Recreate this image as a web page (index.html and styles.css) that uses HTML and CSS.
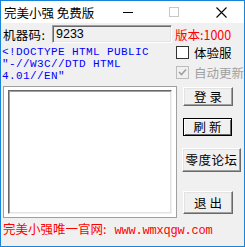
FILE: index.html
```html
<!DOCTYPE html>
<html lang="zh">
<head>
<meta charset="utf-8">
<title>完美小强 免费版</title>
<link rel="stylesheet" href="styles.css">
</head>
<body>
<div class="window">
  <div class="titlebar">
    <span class="title">完美小强 免费版</span>
    <div class="controls">
      <span class="ctl ctl-min"><svg width="11" height="11" viewBox="0 0 11 11"><rect x="0" y="5" width="10" height="1" fill="#000"/></svg></span>
      <span class="ctl ctl-max"><svg width="11" height="11" viewBox="0 0 11 11"><rect x="0.5" y="0.5" width="9" height="9" fill="none" stroke="#c8c8c8"/></svg></span>
      <span class="ctl ctl-close"><svg width="11" height="11" viewBox="0 0 11 11"><path d="M0.5 0.5 L10.5 10.5 M10.5 0.5 L0.5 10.5" stroke="#000" stroke-width="1.1"/></svg></span>
    </div>
  </div>
  <div class="client">
    <div class="row-code">
      <span class="label">机器码:</span>
      <div class="input">9233</div>
      <span class="version">版本:1000</span>
    </div>
    <div class="row-info">
      <div class="doctype">
        <div class="dline">&lt;!DOCTYPE HTML PUBLIC</div>
        <div class="dline">"-//W3C//DTD HTML</div>
        <div class="dline">4.01//EN"</div>
      </div>
      <div class="checks">
        <label class="check"><span class="box"></span><span>体验服</span></label>
        <label class="check disabled"><span class="box"><svg width="11" height="11" viewBox="0 0 11 11"><path d="M2 5 L4.5 7.5 L9 2.5" fill="none" stroke="#a0a0a0" stroke-width="1.6"/></svg></span><span>自动更新</span></label>
      </div>
    </div>
    <div class="row-main">
      <div class="listbox"><div class="list-inner"></div></div>
      <div class="buttons">
        <button class="btn btn-login">登 录</button>
        <button class="btn btn-refresh">刷 新</button>
        <button class="btn btn-forum">零度论坛</button>
        <button class="btn btn-exit">退 出</button>
      </div>
    </div>
    <div class="footer"><span class="cjk">完美小强唯一官网:</span><span class="url">www.wmxqgw.com</span></div>
  </div>
</div>
</body>
</html>
```

FILE: styles.css
```css
* { box-sizing: border-box; }
html, body { margin: 0; padding: 0; background: #f0f0f0; }
body {
  font-family: "Noto Sans CJK SC", "Liberation Sans", sans-serif;
  font-size: 12px;
  color: #000;
}
.window {
  width: 245px;
  height: 247px;
  border: 1px solid #1883d7;
  display: flex;
  flex-direction: column;
  overflow: hidden;
  background: #f0f0f0;
}
.titlebar {
  height: 22px;
  background: #fff;
  display: flex;
  align-items: center;
  padding-left: 3px;
  flex: none;
}
.title { font-size: 12.5px; line-height: 14px; padding-top: 1px; }
.controls { margin-left: auto; display: flex; align-items: center; }
.ctl { display: flex; width: 11px; height: 11px; }
.ctl-min { margin-right: 35px; }
.ctl-max { margin-right: 36px; }
.ctl-close { margin-right: 17px; }
.client {
  flex: 1;
  padding-left: 2px;
  display: flex;
  flex-direction: column;
}
.row-code {
  height: 21px;
  display: flex;
  align-items: center;
  padding-top: 1px;
}
.label { width: 49px; font-size: 12.5px; letter-spacing: 0.3px; }
.input {
  width: 120px;
  height: 18px;
  background: #f0f0f0;
  border-top: 1px solid #a0a0a0;
  border-left: 1px solid #a0a0a0;
  border-right: 1px solid #fff;
  border-bottom: 1px solid #fff;
  box-shadow: inset 1px 1px 0 #696969, inset -1px -1px 0 #e3e3e3;
  font-family: "Liberation Sans", sans-serif;
  font-size: 12.5px;
  line-height: 16px;
  padding-left: 3px;
}
.version {
  color: #ff0000;
  margin-left: 3px;
  font-size: 12.5px;
  white-space: nowrap;
}
.row-info {
  display: flex;
  height: 41px;
}
.doctype {
  width: 174px;
  margin-left: -1px;
  color: #0000ff;
  font-family: "Liberation Mono", monospace;
  font-size: 11px;
  letter-spacing: 0.4px;
  padding-top: 2px;
  white-space: nowrap;
}
.dline { height: 12px; line-height: 12px; }
.checks {
  display: flex;
  flex-direction: column;
  gap: 7px;
  padding-top: 2px;
}
.check {
  display: flex;
  align-items: center;
  gap: 5px;
  font-size: 12.5px;
  height: 13px;
  white-space: nowrap;
}
.box {
  width: 13px;
  height: 13px;
  border: 1px solid #333;
  background: #fff;
  display: flex;
  align-items: center;
  justify-content: center;
  flex: none;
}
.check.disabled { color: #a0a0a0; }
.check.disabled .box { border-color: #bcbcbc; background: #f0f0f0; }
.row-main {
  display: flex;
  height: 132px;
  margin-top: 1px;
}
.listbox {
  width: 174px;
  height: 132px;
  border: 1px solid #a0a0a0;
  background: #fff;
  padding: 3px 4px 3px 4px;
  flex: none;
}
.list-inner {
  height: 100%;
  background: #fff;
  border-top: 1px solid #696969;
  border-left: 1px solid #696969;
  border-right: 1px solid #f0f0f0;
  border-bottom: 1px solid #f0f0f0;
  box-shadow: inset 1px 1px 0 #a0a0a0, inset -1px -1px 0 #e3e3e3;
}
.buttons {
  display: flex;
  flex-direction: column;
  align-items: flex-start;
  margin-left: 6px;
  padding-top: 1px;
}
.btn {
  font-family: "Noto Sans CJK SC", sans-serif;
  font-size: 12.5px;
  line-height: 14px;
  padding: 0;
  margin: 0;
  width: 50px;
  height: 19px;
  background: #f0f0f0;
  color: #000;
  border-top: 1px solid #fff;
  border-left: 1px solid #fff;
  border-right: 1px solid #696969;
  border-bottom: 1px solid #696969;
  box-shadow: inset -1px -1px 0 #a0a0a0, inset 1px 1px 0 #e3e3e3;
  display: flex;
  align-items: center;
  justify-content: center;
  white-space: pre;
}
.btn-refresh {
  margin-top: 12px;
  width: 49px;
  height: 18px;
  border: 1px solid #000;
  box-shadow: inset 1px 1px 0 #fff, inset -1px -1px 0 #696969;
}
.btn-forum {
  margin-top: 12px;
  margin-left: -1px;
  width: 59px;
  height: 24px;
  letter-spacing: 0.5px;
}
.btn-exit {
  margin-top: 19px;
  height: 23px;
}
.footer {
  color: #ff0000;
  padding-top: 4px;
  font-size: 12.5px;
  line-height: 14px;
  white-space: nowrap;
}
.footer .url {
  font-family: "Liberation Mono", monospace;
  font-size: 12px;
  letter-spacing: -0.2px;
  margin-left: 8px;
}
```
